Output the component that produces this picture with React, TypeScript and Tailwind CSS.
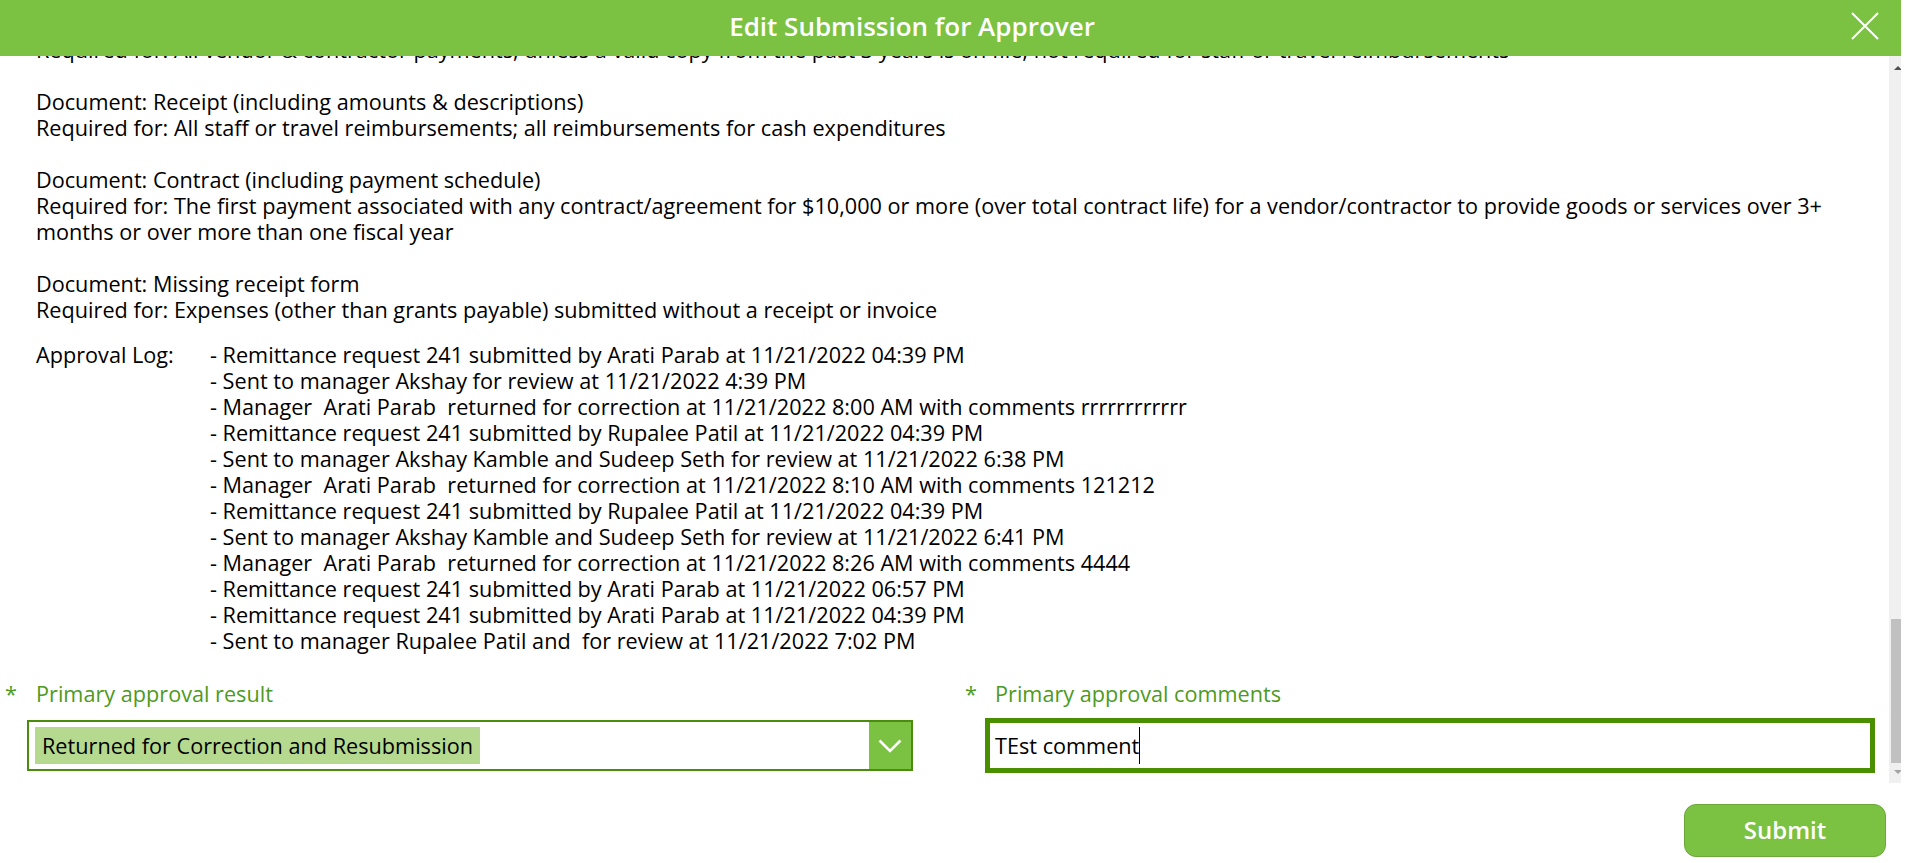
import React from "react"

const docLines = [
  "Required for: All vendor & contractor payments, unless a valid copy from the past 3 years is on file; not required for staff or travel reimbursements",
  "",
  "Document: Receipt (including amounts & descriptions)",
  "Required for: All staff or travel reimbursements; all reimbursements for cash expenditures",
  "",
  "Document: Contract (including payment schedule)",
  "Required for: The first payment associated with any contract/agreement for $10,000 or more (over total contract life) for a vendor/contractor to provide goods or services over 3+ months or over more than one fiscal year",
  "",
  "Document: Missing receipt form",
  "Required for: Expenses (other than grants payable) submitted without a receipt or invoice",
]

const approvalLog = [
  "- Remittance request 241 submitted by Arati Parab at 11/21/2022 04:39 PM",
  "- Sent to manager Akshay for review at 11/21/2022 4:39 PM",
  "- Manager  Arati Parab  returned for correction at 11/21/2022 8:00 AM with comments rrrrrrrrrrrr",
  "- Remittance request 241 submitted by Rupalee Patil at 11/21/2022 04:39 PM",
  "- Sent to manager Akshay Kamble and Sudeep Seth for review at 11/21/2022 6:38 PM",
  "- Manager  Arati Parab  returned for correction at 11/21/2022 8:10 AM with comments 121212",
  "- Remittance request 241 submitted by Rupalee Patil at 11/21/2022 04:39 PM",
  "- Sent to manager Akshay Kamble and Sudeep Seth for review at 11/21/2022 6:41 PM",
  "- Manager  Arati Parab  returned for correction at 11/21/2022 8:26 AM with comments 4444",
  "- Remittance request 241 submitted by Arati Parab at 11/21/2022 06:57 PM",
  "- Remittance request 241 submitted by Arati Parab at 11/21/2022 04:39 PM",
  "- Sent to manager Rupalee Patil and  for review at 11/21/2022 7:02 PM",
]

function FieldLabel({ text, width }: { text: string; width: string }) {
  return (
    <div className="flex h-[26px] text-[#4e9a1e]">
      <span className={`${width} shrink-0`}>*</span>
      <span>{text}</span>
    </div>
  )
}

export default function App() {
  return (
    <div className="w-[1914px] h-[863px] bg-white overflow-hidden font-['Open_Sans',sans-serif]">
      <div className="w-[1901px] h-full flex flex-col">
        {/* header */}
        <div className="h-[56px] shrink-0 bg-[#7bc142] flex items-center">
          <div className="w-[1824px] text-center text-white text-[26px] font-semibold leading-none pb-[5px]">
            Edit Submission for Approver
          </div>
          <button className="ml-[27px] w-[28px] h-[28px] mt-[-4px]" aria-label="Close">
            <svg viewBox="0 0 28 28" className="w-[28px] h-[28px]">
              <path d="M1 1 L27 27 M27 1 L1 27" stroke="white" strokeWidth="2" fill="none" />
            </svg>
          </button>
        </div>

        {/* scroll region */}
        <div className="h-[727px] shrink-0 flex">
          <div className="flex-1 overflow-hidden text-[21.66px] leading-[26px] text-black">
            <div className="mt-[-19px] pl-[36px] pr-[34px]">
              {docLines.map((line, i) => (
                <div key={i} className="min-h-[26px]">
                  {line}
                </div>
              ))}
            </div>

            <div className="mt-[19px] pl-[36px] flex">
              <div className="w-[174px] shrink-0">Approval Log:</div>
              <div className="whitespace-pre">
                {approvalLog.map((entry, i) => (
                  <div key={i}>{entry}</div>
                ))}
              </div>
            </div>

            <div className="mt-[27px] flex">
              <div className="w-[913px] shrink-0">
                <div className="pl-[5px]">
                  <FieldLabel text="Primary approval result" width="w-[31px]" />
                </div>
                <div className="ml-[27px] mt-[13px] h-[51px] border-2 border-[#4a8c0b] flex">
                  <div className="flex-1 flex items-center pl-[6px]">
                    <span className="h-[37px] px-[7px] flex items-center bg-[#b5d98f]">
                      Returned for Correction and Resubmission
                    </span>
                  </div>
                  <div className="w-[42px] bg-[#7bc142] flex items-center justify-center">
                    <svg viewBox="0 0 24 14" className="w-[24px] h-[14px]">
                      <path d="M1.5 1.5 L12 12 L22.5 1.5" stroke="white" strokeWidth="2.6" fill="none" />
                    </svg>
                  </div>
                </div>
              </div>

              <div className="ml-[52px] w-[910px] shrink-0">
                <FieldLabel text="Primary approval comments" width="w-[30px]" />
                <div className="ml-[20px] mt-[11px] w-[890px] h-[55px] border-[5px] border-[#4a8f00] flex items-center pl-[5px]">
                  <span>TEst comment</span>
                  <span className="w-px h-[37px] bg-black" />
                </div>
              </div>
            </div>
          </div>

          {/* scrollbar */}
          <div className="w-[12px] shrink-0 bg-[#f0f0f0] flex flex-col">
            <svg viewBox="0 0 12 20" className="w-[12px] h-[20px]">
              <polygon points="5,14 9,10 13,14" fill="#505050" />
            </svg>
            <div className="flex-1" />
            <div className="ml-[2px] h-[144px] bg-[#c1c1c1]" />
            <svg viewBox="0 0 12 20" className="w-[12px] h-[20px]">
              <polygon points="5,7 13,7 9,11" fill="#a3a3a3" />
            </svg>
          </div>
        </div>

        {/* footer */}
        <div className="flex-1 flex justify-end items-start pt-[21px] pr-[15px]">
          <button className="w-[202px] h-[53px] rounded-xl bg-[#7bc142] border border-[#6aa83a] text-white text-[24px] font-semibold leading-none pb-[2px]">
            Submit
          </button>
        </div>
      </div>
    </div>
  )
}
